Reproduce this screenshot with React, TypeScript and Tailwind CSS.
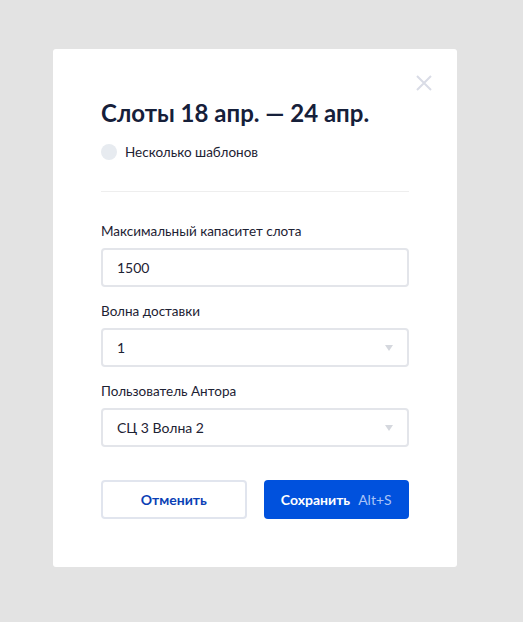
import React from "react";

function Caret() {
  return (
    <svg width="8" height="6" viewBox="0 0 8 6" className="shrink-0">
      <path d="M0 0 L8 0 L4 6 Z" fill="#d5d8de" />
    </svg>
  );
}

function Field({ label, children }: { label: string; children: React.ReactNode }) {
  return (
    <div className="flex flex-col gap-[7px]">
      <div className="text-[13.5px] leading-[20px] text-[#1d2233]">{label}</div>
      {children}
    </div>
  );
}

export default function App() {
  return (
    <div
      className="min-h-[622px] w-full bg-[#e3e3e3] pt-[49px] pl-[53px]"
      style={{ fontFamily: "Lato, 'Noto Sans', sans-serif" }}
    >
      <div className="relative w-[404px] h-[518px] bg-white rounded-[3px] px-[48px] pt-[49px] pb-[48px] flex flex-col">
        <button className="absolute right-[25px] top-[26px] w-[16px] h-[16px]">
          <svg width="16" height="16" viewBox="0 0 16 16">
            <path d="M1 1 L15 15 M15 1 L1 15" stroke="#d9dce6" strokeWidth="2" />
          </svg>
        </button>
        <h1 className="text-[24px] leading-[30px] font-bold text-[#16203a]">
          Слоты 18 апр. — 24 апр.
        </h1>
        <div className="mt-[14px] flex items-center gap-[8px]">
          <span className="w-[16px] h-[16px] rounded-full bg-[#e7ebf0]" />
          <span className="text-[13.5px] leading-[20px] text-[#1d2233]">Несколько шаблонов</span>
        </div>
        <div className="mt-[29px] h-px bg-[#eeeeee]" />
        <div className="mt-[29px] flex flex-col gap-[14px]">
          <Field label="Максимальный капаситет слота">
            <div className="h-[39px] border-2 border-[#e3e5ea] rounded-[4px] px-[14px] flex items-center text-[14px] text-[#1d2233]">
              1500
            </div>
          </Field>
          <Field label="Волна доставки">
            <div className="h-[39px] border-2 border-[#e3e5ea] rounded-[4px] px-[14px] flex items-center justify-between text-[14px] text-[#1d2233]">
              <span>1</span>
              <Caret />
            </div>
          </Field>
          <Field label="Пользователь Антора">
            <div className="h-[39px] border-2 border-[#e3e5ea] rounded-[4px] px-[14px] flex items-center justify-between text-[14px] text-[#1d2233]">
              <span>СЦ 3 Волна 2</span>
              <Caret />
            </div>
          </Field>
        </div>
        <div className="mt-auto flex gap-[17px]">
          <button className="w-[146px] h-[39px] border-2 border-[#e1e5ee] rounded-[4px] text-[14px] font-bold text-[#0b3fb5] flex items-center justify-center">
            Отменить
          </button>
          <button className="w-[146px] h-[39px] rounded-[4px] bg-[#0051dd] text-[14px] flex items-center justify-center gap-[8px]">
            <span className="font-bold text-white">Сохранить</span>
            <span className="text-[#a9c3f7]">Alt+S</span>
          </button>
        </div>
      </div>
    </div>
  );
}
